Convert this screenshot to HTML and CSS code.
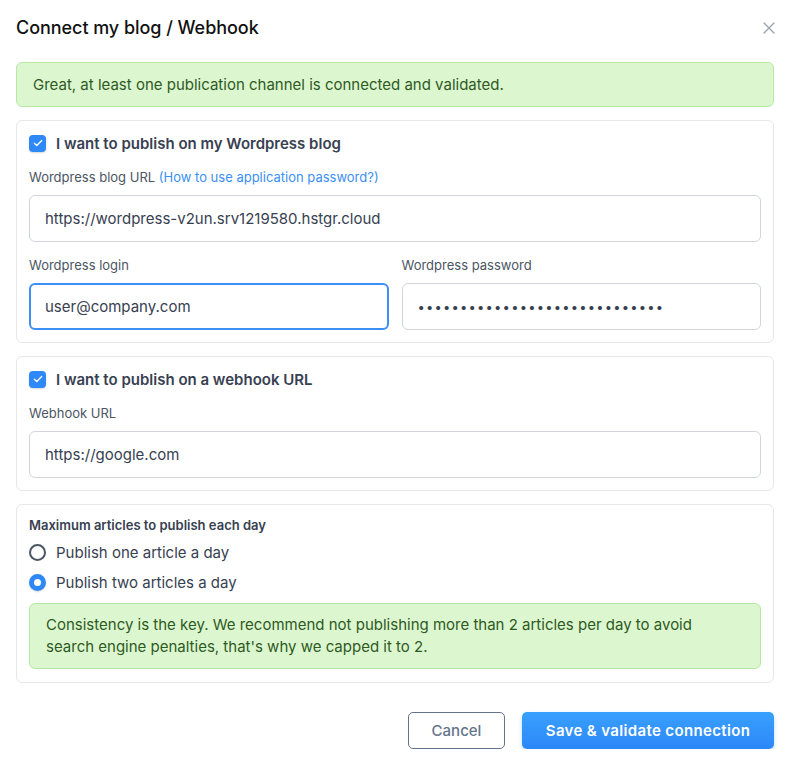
FILE: index.html
```html
<!DOCTYPE html>
<html lang="en">
<head>
<meta charset="utf-8">
<title>Connect my blog / Webhook</title>
<link rel="stylesheet" href="styles.css">
</head>
<body>
<div class="modal">
  <div class="modal-header">
    <h1 class="modal-title">Connect my blog / Webhook</h1>
    <button class="close-btn" aria-label="Close">
      <svg width="12" height="12" viewBox="0 0 12 12"><path d="M1 1L11 11M11 1L1 11" stroke="#9ca3af" stroke-width="1.4" stroke-linecap="round"/></svg>
    </button>
  </div>

  <div class="alert alert-top">Great, at least one publication channel is connected and validated.</div>

  <div class="card">
    <label class="check-row">
      <span class="checkbox"><svg width="10" height="8" viewBox="0 0 10 8"><path d="M1.3 4.2L3.8 6.5L8.7 1.5" fill="none" stroke="#fff" stroke-width="1.3" stroke-linecap="round" stroke-linejoin="round"/></svg></span>
      <span class="check-label">I want to publish on my Wordpress blog</span>
    </label>
    <div class="field">
      <div class="field-label">Wordpress blog URL <a class="link" href="#">(How to use application password?)</a></div>
      <div class="input">https://wordpress-v2un.srv1219580.hstgr.cloud</div>
    </div>
    <div class="field-row">
      <div class="field">
        <div class="field-label">Wordpress login</div>
        <div class="input input-focus">user@company.com</div>
      </div>
      <div class="field">
        <div class="field-label">Wordpress password</div>
        <div class="input input-pass">•••••••••••••••••••••••••••••</div>
      </div>
    </div>
  </div>

  <div class="card">
    <label class="check-row">
      <span class="checkbox"><svg width="10" height="8" viewBox="0 0 10 8"><path d="M1.3 4.2L3.8 6.5L8.7 1.5" fill="none" stroke="#fff" stroke-width="1.3" stroke-linecap="round" stroke-linejoin="round"/></svg></span>
      <span class="check-label">I want to publish on a webhook URL</span>
    </label>
    <div class="field">
      <div class="field-label">Webhook URL</div>
      <div class="input">https://google.com</div>
    </div>
  </div>

  <div class="card card-radio">
    <div class="section-label">Maximum articles to publish each day</div>
    <div class="radios">
      <label class="radio-row"><span class="radio"></span><span class="radio-label">Publish one article a day</span></label>
      <label class="radio-row"><span class="radio radio-on"></span><span class="radio-label">Publish two articles a day</span></label>
    </div>
    <div class="alert alert-inner">Consistency is the key. We recommend not publishing more than 2 articles per day to avoid search engine penalties, that's why we capped it to 2.</div>
  </div>

  <div class="footer">
    <button class="btn btn-cancel">Cancel</button>
    <button class="btn btn-primary">Save &amp; validate connection</button>
  </div>
</div>
</body>
</html>
```

FILE: styles.css
```css
* { box-sizing: border-box; }
html, body { margin: 0; padding: 0; background: #fff; }
body { font-family: Inter, "Noto Sans", "Liberation Sans", sans-serif; color: #374151; }

.modal { padding: 16px 16px 0; width: 790px; }

.modal-header { display: flex; align-items: center; justify-content: space-between; height: 24px; }
.modal-title { margin: 0; font-size: 18px; font-weight: 500; color: #111; line-height: 24px; letter-spacing: -0.05px; }
.close-btn { border: 0; background: none; padding: 0; margin-right: -1px; width: 12px; height: 12px; display: flex; }

.alert { background: #dcf7d0; border: 1px solid #b7e9a4; border-radius: 6px; color: #2f5a1f; font-size: 15px; }
.alert-top { margin-top: 22px; padding: 12px 16px; line-height: 19px; }

.card { margin-top: 13px; border: 1px solid #e5e7eb; border-radius: 6px; padding: 11px 12px 12px; }

.check-row { display: flex; align-items: center; gap: 10px; height: 22px; }
.checkbox { width: 17px; height: 17px; border-radius: 4px; background: #2f88f8; display: flex; align-items: center; justify-content: center; box-shadow: 0 1px 2px rgba(0,0,0,0.15); }
.check-label { font-size: 15px; font-weight: 600; color: #374151; }

.field { margin-top: 14px; flex: 1; }
.field-label { font-size: 13px; line-height: 18px; color: #4b5563; margin-bottom: 9px; }
.link { color: #3b8ff6; text-decoration: none; }

.input { height: 47px; border: 1px solid #d1d5db; border-radius: 6px; padding: 0 15px; display: flex; align-items: center; font-size: 15px; color: #374151; }
.input-focus { border: 2px solid #3b8ff6; padding: 0 14px; }
.input-pass { font-size: 13px; letter-spacing: 1.2px; color: #374151; }

.field-row { display: flex; gap: 13px; }

.card-radio { padding-bottom: 13px; }
.section-label { font-size: 13px; line-height: 18px; font-weight: 600; color: #374151; }
.radios { margin-top: 7px; display: flex; flex-direction: column; gap: 8px; }
.radio-row { display: flex; align-items: center; gap: 10px; height: 22px; }
.radio { width: 17px; height: 17px; border-radius: 50%; border: 2px solid #4b5563; }
.radio-on { border: 5px solid #2f88f8; background: #fff; box-shadow: 0 1px 2px rgba(0,0,0,0.15); }
.radio-label { font-size: 15px; color: #374151; }

.alert-inner { margin-top: 10px; padding: 10px 16px; line-height: 22px; font-size: 15px; }

.footer { display: flex; justify-content: flex-end; gap: 17px; margin-top: 29px; }
.btn { height: 37px; border-radius: 5px; font-family: inherit; font-size: 15px; font-weight: 500; cursor: pointer; }
.btn-cancel { width: 97px; background: #fff; border: 1px solid #64748b; color: #64748b; }
.btn-primary { width: 252px; border: 0; color: #fff; font-weight: 600; background: linear-gradient(#38a0fe, #2d87f7); box-shadow: 0 2px 4px rgba(45,135,247,0.3); letter-spacing: 0.35px; }
```
